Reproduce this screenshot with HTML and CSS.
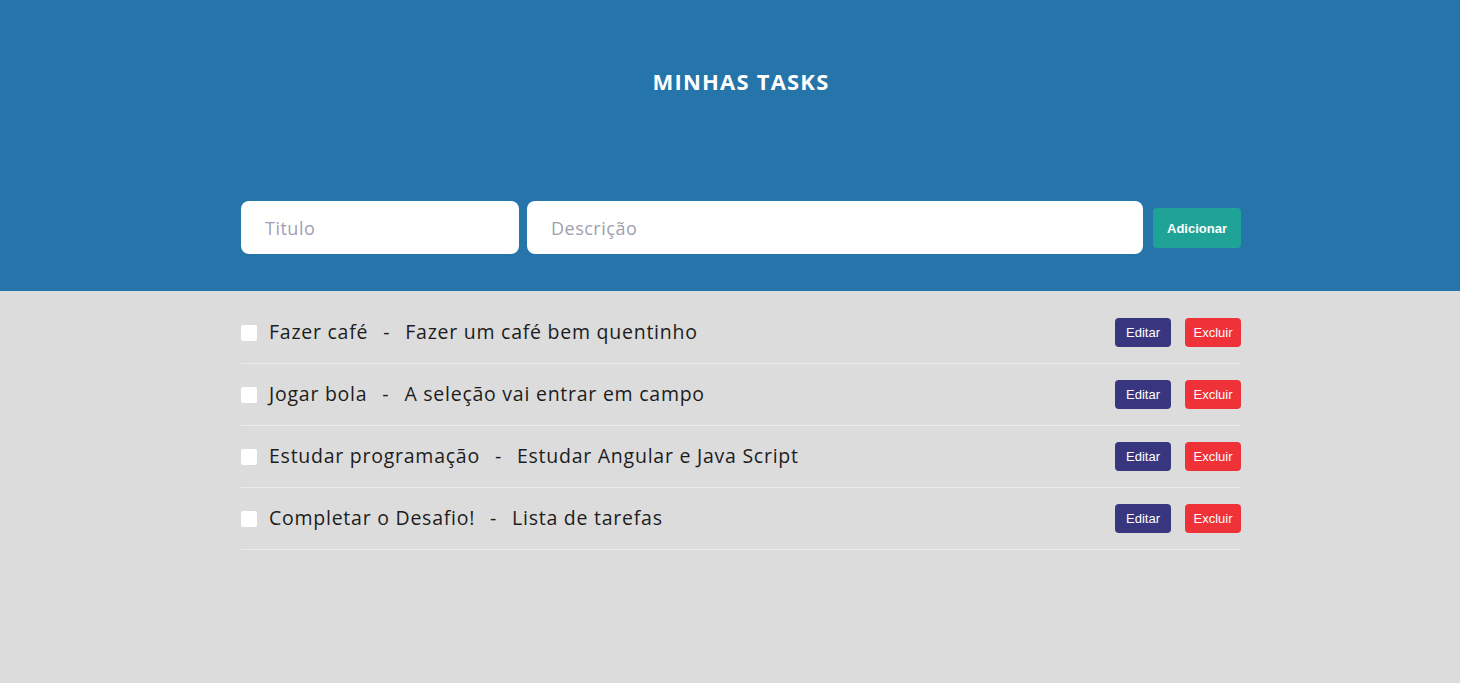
FILE: index.html
```html
<!DOCTYPE html>
<html lang="pt-BR">
<head>
<meta charset="utf-8">
<title>Minhas Tasks</title>
<link rel="stylesheet" href="styles.css">
</head>
<body>
<header class="top">
  <div class="inner">
    <h1 class="title">MINHAS TASKS</h1>
    <form class="form">
      <input class="field field-title" type="text" placeholder="Titulo">
      <input class="field field-desc" type="text" placeholder="Descrição">
      <button type="button" class="btn btn-add">Adicionar</button>
    </form>
  </div>
</header>
<main class="list-wrap">
  <ul class="list">
    <li class="item">
      <span class="check"></span>
      <span class="text">Fazer café<span class="dash">-</span>Fazer um café bem quentinho</span>
      <span class="actions"><button class="btn btn-edit">Editar</button><button class="btn btn-del">Excluir</button></span>
    </li>
    <li class="item">
      <span class="check"></span>
      <span class="text">Jogar bola<span class="dash">-</span>A seleção vai entrar em campo</span>
      <span class="actions"><button class="btn btn-edit">Editar</button><button class="btn btn-del">Excluir</button></span>
    </li>
    <li class="item">
      <span class="check"></span>
      <span class="text">Estudar programação<span class="dash">-</span>Estudar Angular e Java Script</span>
      <span class="actions"><button class="btn btn-edit">Editar</button><button class="btn btn-del">Excluir</button></span>
    </li>
    <li class="item">
      <span class="check"></span>
      <span class="text">Completar o Desafio!<span class="dash">-</span>Lista de tarefas</span>
      <span class="actions"><button class="btn btn-edit">Editar</button><button class="btn btn-del">Excluir</button></span>
    </li>
  </ul>
</main>
</body>
</html>
```
FILE: styles.css
```css
* { box-sizing: border-box; }
html, body { margin: 0; padding: 0; }
body {
  background: #dcdcdc;
  font-family: "Open Sans", "Noto Sans", sans-serif;
  height: 683px;
  overflow: hidden;
}
.top {
  background: #2574aa;
  height: 291px;
  padding-left: 22px;
}
.inner {
  width: 1000px;
  margin: 0 auto;
  display: flex;
  flex-direction: column;
  align-items: center;
}
.title {
  margin: 0;
  padding-top: 66px;
  color: #fff;
  font-size: 22px;
  font-weight: 700;
  line-height: 30px;
  letter-spacing: 1.2px;
}
.form {
  margin-top: 105px;
  width: 100%;
  display: flex;
  align-items: center;
  gap: 8px;
}
.field {
  height: 53px;
  border: none;
  border-radius: 8px;
  background: #fff;
  padding: 0 24px;
  font-family: inherit;
  font-size: 18px;
  letter-spacing: 0.5px;
  color: #222;
  outline: none;
}
.field::placeholder { color: #a09fb0; }
.field-title { width: 278px; }
.field-desc { width: 616px; }
.btn {
  border: none;
  border-radius: 4px;
  color: #fff;
  font-family: "Liberation Sans", Arial, sans-serif;
  font-size: 13px;
  cursor: pointer;
  padding: 0;
}
.btn-add {
  margin-left: 2px;
  width: 88px;
  height: 40px;
  padding-top: 2px;
  background: #1fa396;
  font-weight: 700;
}
.list-wrap {
  padding-left: 22px;
}
.list {
  list-style: none;
  margin: 0 auto;
  padding: 11px 0 0;
  width: 1000px;
}
.item {
  display: flex;
  align-items: center;
  height: 62px;
  border-bottom: 1px solid #ececec;
}
.check {
  width: 16px;
  height: 16px;
  background: #fff;
  border-radius: 2px;
  flex: none;
}
.text {
  margin-left: 12px;
  flex: 1;
  font-size: 19.5px;
  letter-spacing: 0.75px;
  color: #1d1d1d;
  line-height: 24px;
  padding-bottom: 2px;
}
.dash { margin: 0 15px; }
.actions {
  display: flex;
  gap: 14px;
}
.btn-edit, .btn-del {
  width: 56px;
  height: 29px;
}
.btn-edit { background: #37367e; }
.btn-del { background: #ee3237; }
```
